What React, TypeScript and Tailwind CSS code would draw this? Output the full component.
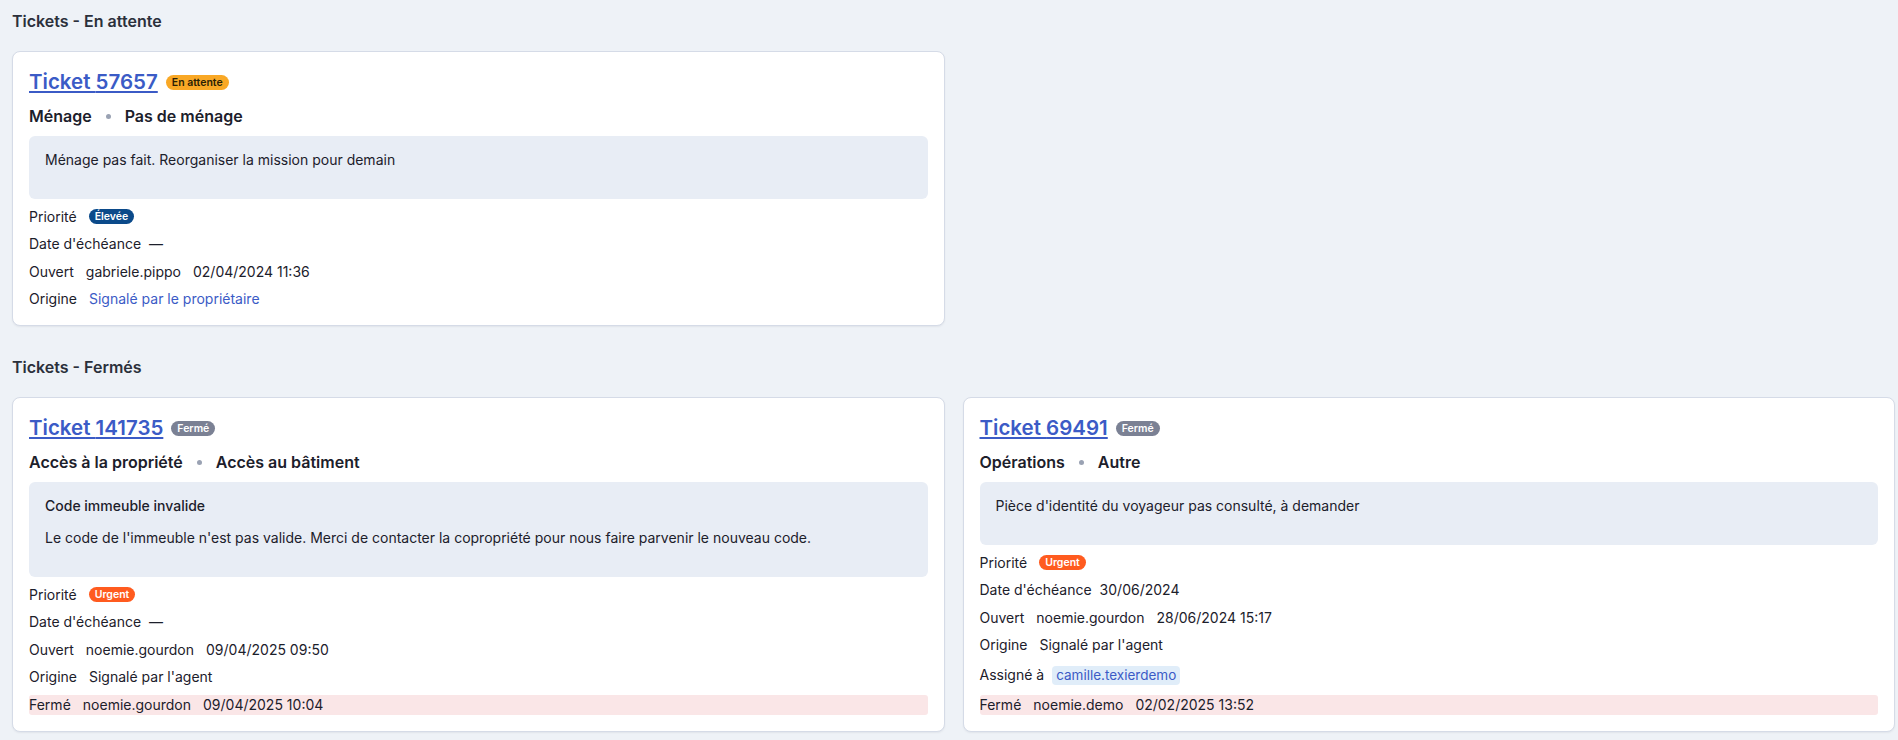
import React from "react";

type Row = {
  label: string;
  kind: "badge" | "text" | "chip" | "closed";
  values?: string[];
  badge?: { text: string; className: string };
  tight?: boolean;
  link?: boolean;
};

interface Ticket {
  id: string;
  status: { text: string; className: string };
  category: string;
  subcategory: string;
  description: { title?: string; body: string };
  rows: Row[];
}

const urgent = { text: "Urgent", className: "bg-[#ff5b1f] text-white" };

const pendingTickets: Ticket[] = [
  {
    id: "57657",
    status: { text: "En attente", className: "bg-[#f9a825] text-[#2a1f05]" },
    category: "Ménage",
    subcategory: "Pas de ménage",
    description: { body: "Ménage pas fait. Reorganiser la mission pour demain" },
    rows: [
      { label: "Priorité", kind: "badge", badge: { text: "Élevée", className: "bg-[#0b4a8a] text-white" } },
      { label: "Date d'échéance", kind: "text", values: ["—"], tight: true },
      { label: "Ouvert", kind: "text", values: ["gabriele.pippo", "02/04/2024 11:36"] },
      { label: "Origine", kind: "text", values: ["Signalé par le propriétaire"], link: true },
    ],
  },
];

const closedTickets: Ticket[] = [
  {
    id: "141735",
    status: { text: "Fermé", className: "bg-[#7b8194] text-white" },
    category: "Accès à la propriété",
    subcategory: "Accès au bâtiment",
    description: {
      title: "Code immeuble invalide",
      body: "Le code de l'immeuble n'est pas valide. Merci de contacter la copropriété pour nous faire parvenir le nouveau code.",
    },
    rows: [
      { label: "Priorité", kind: "badge", badge: urgent },
      { label: "Date d'échéance", kind: "text", values: ["—"], tight: true },
      { label: "Ouvert", kind: "text", values: ["noemie.gourdon", "09/04/2025 09:50"] },
      { label: "Origine", kind: "text", values: ["Signalé par l'agent"] },
      { label: "Fermé", kind: "closed", values: ["noemie.gourdon", "09/04/2025 10:04"] },
    ],
  },
  {
    id: "69491",
    status: { text: "Fermé", className: "bg-[#7b8194] text-white" },
    category: "Opérations",
    subcategory: "Autre",
    description: { body: "Pièce d'identité du voyageur pas consulté, à demander" },
    rows: [
      { label: "Priorité", kind: "badge", badge: urgent },
      { label: "Date d'échéance", kind: "text", values: ["30/06/2024"], tight: true },
      { label: "Ouvert", kind: "text", values: ["noemie.gourdon", "28/06/2024 15:17"] },
      { label: "Origine", kind: "text", values: ["Signalé par l'agent"] },
      { label: "Assigné à", kind: "chip", values: ["camille.texierdemo"] },
      { label: "Fermé", kind: "closed", values: ["noemie.demo", "02/02/2025 13:52"] },
    ],
  },
];

const Badge = ({ text, className }: { text: string; className: string }) => (
  <span className={`inline-flex h-[15px] items-center rounded-full px-[6px] text-[10.5px] font-semibold leading-[15px] ${className}`}>{text}</span>
);

const FieldRow = ({ row }: { row: Row }) => {
  if (row.kind === "badge" && row.badge) {
    return (
      <div className="flex h-5 items-center gap-3">
        <span>{row.label}</span>
        <Badge {...row.badge} />
      </div>
    );
  }

  if (row.kind === "chip") {
    return (
      <div className="flex h-[25px] items-center gap-2">
        <span>{row.label}</span>
        <span className="inline-flex h-[19px] items-center rounded-[4px] bg-[#e0edf9] px-1 text-[13.5px] text-[#3b5bc6]">{row.values?.[0]}</span>
      </div>
    );
  }

  if (row.kind === "closed") {
    return (
      <div className="flex h-5 items-center gap-3 rounded-[3px] bg-[#fae6e7]">
        <span>{row.label}</span>
        {row.values?.map((v) => (
          <span key={v}>{v}</span>
        ))}
      </div>
    );
  }

  return (
    <div className={`flex h-5 items-center ${row.tight ? "gap-2" : "gap-3"}`}>
      <span>{row.label}</span>
      {row.values?.map((v) => (
        <span key={v} className={row.link ? "text-[#3b5bc6]" : ""}>
          {v}
        </span>
      ))}
    </div>
  );
};

const TicketCard = ({ ticket }: { ticket: Ticket }) => (
  <div className="flex flex-col rounded-lg border border-[#d5dbe7] bg-white p-4 shadow-[0_1px_2px_rgba(15,23,42,0.06)]">
    <div className="flex h-7 items-center gap-2">
      <a href="#" className="text-[20.5px] font-semibold leading-7 text-[#3b5bc6] underline underline-offset-2">
        Ticket {ticket.id}
      </a>
      <Badge {...ticket.status} />
    </div>

    <div className="mt-2 flex h-6 items-center gap-[14px] text-base font-semibold text-[#1c202b]">
      <span>{ticket.category}</span>
      <span className="h-[5px] w-[5px] rounded-full bg-[#9aa2b3]" />
      <span>{ticket.subcategory}</span>
    </div>

    <div className="mt-2 flex flex-col gap-3 rounded-md bg-[#e8edf5] px-4 pb-[29px] pt-[14px] text-sm leading-5 text-[#1c202b]">
      {ticket.description.title && <p className="font-medium">{ticket.description.title}</p>}
      <p>{ticket.description.body}</p>
    </div>

    <div className="mt-[7.5px] flex flex-col gap-[7.5px] text-sm leading-5 text-[#1c202b]">
      {ticket.rows.map((row) => (
        <FieldRow key={row.label} row={row} />
      ))}
    </div>
  </div>
);

const App = () => {
  return (
    <div className="min-h-screen bg-[#eef2f7] pb-4 pl-3 pr-[3px] pt-[9px] font-['Inter',sans-serif]">
      <h2 className="text-base font-semibold leading-6 text-[#2b303b]">Tickets - En attente</h2>
      <div className="mt-[18px] grid grid-cols-2 gap-[18px]">
        {pendingTickets.map((t) => (
          <TicketCard key={t.id} ticket={t} />
        ))}
      </div>

      <h2 className="mt-[29px] text-base font-semibold leading-6 text-[#2b303b]">Tickets - Fermés</h2>
      <div className="mt-[18px] grid grid-cols-2 gap-[18px]">
        {closedTickets.map((t) => (
          <TicketCard key={t.id} ticket={t} />
        ))}
      </div>
    </div>
  );
};

export default App;
